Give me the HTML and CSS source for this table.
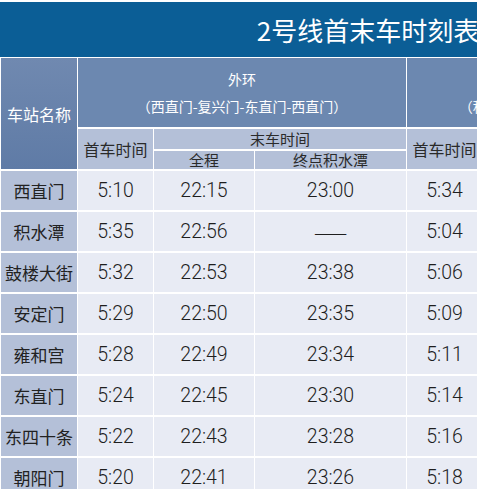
FILE: index.html
```html
<!DOCTYPE html>
<html lang="zh-CN">
<head>
<meta charset="utf-8">
<title>2号线首末车时刻表</title>
<link rel="stylesheet" href="styles.css">
</head>
<body>
<div class="sheet">
  <div class="title">2号线首末车时刻表</div>
  <table class="tt">
    <colgroup>
      <col class="c-st"><col class="c-first"><col class="c-full"><col class="c-term">
      <col class="c-first"><col class="c-full"><col class="c-term">
    </colgroup>
    <thead>
      <tr class="r-dir">
        <th class="h-dark h-st" rowspan="3">车站名称</th>
        <th class="h-dark h-dir" colspan="3"><div class="dir-name">外环</div><div class="dir-route">（西直门-复兴门-东直门-西直门）</div></th>
        <th class="h-dark h-dir" colspan="3"><div class="dir-name">内环</div><div class="dir-route">（积水潭-东四十条-复兴门-积水潭）</div></th>
      </tr>
      <tr class="r-sub1">
        <th class="h-light" rowspan="2">首车时间</th>
        <th class="h-light" colspan="2">末车时间</th>
        <th class="h-light" rowspan="2">首车时间</th>
        <th class="h-light" colspan="2">末车时间</th>
      </tr>
      <tr class="r-sub2">
        <th class="h-light">全程</th>
        <th class="h-light">终点积水潭</th>
        <th class="h-light">全程</th>
        <th class="h-light">终点西直门</th>
      </tr>
    </thead>
    <tbody>
      <tr><td class="st">西直门</td><td>5:10</td><td>22:15</td><td>23:00</td><td>5:34</td><td>22:40</td><td>23:10</td></tr>
      <tr><td class="st">积水潭</td><td>5:35</td><td>22:56</td><td class="dash">——</td><td>5:04</td><td>22:36</td><td>23:06</td></tr>
      <tr><td class="st">鼓楼大街</td><td>5:32</td><td>22:53</td><td>23:38</td><td>5:06</td><td>22:38</td><td>23:08</td></tr>
      <tr><td class="st">安定门</td><td>5:29</td><td>22:50</td><td>23:35</td><td>5:09</td><td>22:41</td><td>23:11</td></tr>
      <tr><td class="st">雍和宫</td><td>5:28</td><td>22:49</td><td>23:34</td><td>5:11</td><td>22:43</td><td>23:13</td></tr>
      <tr><td class="st">东直门</td><td>5:24</td><td>22:45</td><td>23:30</td><td>5:14</td><td>22:46</td><td>23:16</td></tr>
      <tr><td class="st">东四十条</td><td>5:22</td><td>22:43</td><td>23:28</td><td>5:16</td><td>22:48</td><td>23:18</td></tr>
      <tr><td class="st">朝阳门</td><td>5:20</td><td>22:41</td><td>23:26</td><td>5:18</td><td>22:50</td><td>23:20</td></tr>
    </tbody>
  </table>
</div>
</body>
</html>
```
FILE: styles.css
```css
html, body {
  margin: 0;
  padding: 0;
  overflow: hidden;
  background: #ffffff;
}
.sheet {
  width: 736px;
  padding-top: 2px;
  font-family: "Noto Sans CJK SC", "Noto Sans", sans-serif;
}
.title {
  height: 55px;
  background: #0b5e96;
  color: #ffffff;
  font-size: 26px;
  line-height: 55px;
  text-align: center;
  letter-spacing: 0;
}
.tt {
  width: 736px;
  table-layout: fixed;
  border-collapse: separate;
  border-spacing: 1px 2px;
  margin-top: -1px;
}
.c-st { width: 76px; }
.c-first { width: 75px; }
.c-full { width: 100px; }
.c-term { width: 151px; }
.tt th, .tt td {
  padding: 0;
  text-align: center;
  font-weight: normal;
  white-space: nowrap;
  overflow: hidden;
}
.h-dark {
  background: #6c88b0;
  color: #ffffff;
}
.h-st {
  background: linear-gradient(#7089b0, #5f7ba6);
  font-size: 16px;
}
.r-dir th { height: 69px; }
.h-dir { font-size: 14px; padding-top: 8px; }
.dir-name { line-height: 26px; }
.dir-route { line-height: 28px; }
.h-light {
  background: #b4c0d8;
  color: #2a2a2a;
  font-size: 15px;
}
.r-sub1 .h-light { height: 20px; line-height: 20px; }
.r-sub2 .h-light { height: 18px; line-height: 18px; }
.r-sub1 .h-light[rowspan] { font-size: 16px; }
.tt td {
  height: 39px;
  background: #e8ebf4;
  color: #1e1e1e;
  font-family: "Roboto", "Liberation Sans", sans-serif;
  font-weight: 300;
  font-size: 19.5px;
}
.tt td.st {
  background: #b4c0d8;
  font-family: "Noto Sans CJK SC", sans-serif;
  font-weight: normal;
  font-size: 17px;
  color: #222222;
}
.tt td.dash {
  font-family: "Noto Sans CJK SC", sans-serif;
  font-weight: 300;
  font-size: 20px;
  letter-spacing: 0;
}
```
